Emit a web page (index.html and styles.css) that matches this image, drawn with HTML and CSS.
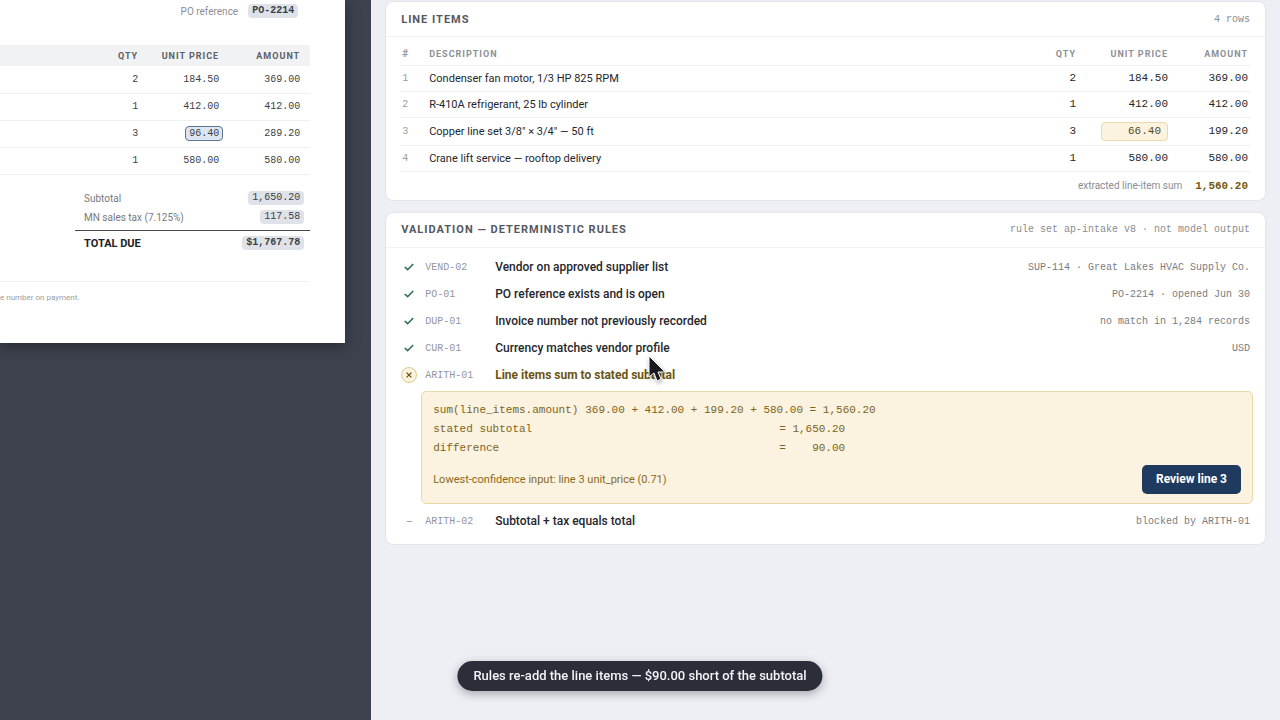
FILE: index.html
```html
<!DOCTYPE html>
<html lang="en">
<head>
    <meta charset="UTF-8">
    <meta name="viewport" content="width=device-width, initial-scale=1.0">
    <title>Invoice review</title>
    <link rel="stylesheet" href="styles.css">
</head>
<body>
    <section class="viewer">
        <div class="sheet">
            <div class="po">
                <span>PO reference</span>
                <b class="field">PO-2214</b>
            </div>
            <table class="invoice">
                <thead>
                    <tr><th></th><th class="qty">Qty</th><th class="unit">Unit price</th><th class="amount">Amount</th></tr>
                </thead>
                <tbody>
                    <tr><td></td><td>2</td><td>184.50</td><td>369.00</td></tr>
                    <tr><td></td><td>1</td><td>412.00</td><td>412.00</td></tr>
                    <tr><td></td><td>3</td><td><span class="picked">96.40</span></td><td>289.20</td></tr>
                    <tr><td></td><td>1</td><td>580.00</td><td>580.00</td></tr>
                </tbody>
            </table>
            <div class="totals">
                <div class="total-row"><span>Subtotal</span><span class="field">1,650.20</span></div>
                <div class="total-row"><span>MN sales tax (7.125%)</span><span class="field">117.58</span></div>
                <div class="total-row due"><span>TOTAL DUE</span><span class="field">$1,767.78</span></div>
            </div>
            <p class="footnote">e number on payment.</p>
        </div>
    </section>

    <main class="review">
        <section class="card">
            <header class="card-head">
                <h2>Line items</h2>
                <span>4 rows</span>
            </header>
            <div class="items-wrap">
                <table class="items">
                    <thead>
                        <tr><th class="num">#</th><th class="desc">Description</th><th class="qty">Qty</th><th class="unit">Unit price</th><th class="amount">Amount</th></tr>
                    </thead>
                    <tbody>
                        <tr><td class="num">1</td><td class="desc">Condenser fan motor, 1/3 HP 825 RPM</td><td>2</td><td>184.50</td><td>369.00</td></tr>
                        <tr><td class="num">2</td><td class="desc">R-410A refrigerant, 25 lb cylinder</td><td>1</td><td>412.00</td><td>412.00</td></tr>
                        <tr class="flagged"><td class="num">3</td><td class="desc">Copper line set 3/8" × 3/4" — 50 ft</td><td>3</td><td><input type="text" class="price" aria-label="Line 3 unit price" value="66.40"></td><td>199.20</td></tr>
                        <tr><td class="num">4</td><td class="desc">Crane lift service — rooftop delivery</td><td>1</td><td>580.00</td><td>580.00</td></tr>
                    </tbody>
                </table>
                <div class="sum">
                    <span>extracted line-item sum</span>
                    <b>1,560.20</b>
                </div>
            </div>
        </section>

        <section class="card">
            <header class="card-head">
                <h2>Validation — deterministic rules</h2>
                <span>rule set ap-intake v8 · not model output</span>
            </header>
            <div class="rules">
                <div class="rule">
                    <svg class="check" viewBox="0 0 16 16"><path d="M3.8 8l2.8 2.7L12.2 5"/></svg>
                    <code>VEND-02</code>
                    <strong>Vendor on approved supplier list</strong>
                    <span class="note">SUP-114 · Great Lakes HVAC Supply Co.</span>
                </div>
                <div class="rule">
                    <svg class="check" viewBox="0 0 16 16"><path d="M3.8 8l2.8 2.7L12.2 5"/></svg>
                    <code>PO-01</code>
                    <strong>PO reference exists and is open</strong>
                    <span class="note">PO-2214 · opened Jun 30</span>
                </div>
                <div class="rule">
                    <svg class="check" viewBox="0 0 16 16"><path d="M3.8 8l2.8 2.7L12.2 5"/></svg>
                    <code>DUP-01</code>
                    <strong>Invoice number not previously recorded</strong>
                    <span class="note">no match in 1,284 records</span>
                </div>
                <div class="rule">
                    <svg class="check" viewBox="0 0 16 16"><path d="M3.8 8l2.8 2.7L12.2 5"/></svg>
                    <code>CUR-01</code>
                    <strong>Currency matches vendor profile</strong>
                    <span class="note">USD</span>
                </div>
                <div class="rule failed">
                    <svg class="cross" viewBox="0 0 16 16"><circle cx="8" cy="8" r="7.5"/><path d="M5.6 5.6l4.8 4.8M10.4 5.6l-4.8 4.8"/></svg>
                    <code>ARITH-01</code>
                    <strong>Line items sum to stated subtotal</strong>
                </div>
                <div class="detail">
                    <div class="math">
                        <span>sum(line_items.amount)</span><span>369.00 + 412.00 + 199.20 + 580.00 = 1,560.20</span>
                        <span>stated subtotal</span><span class="result"><i>=</i>1,650.20</span>
                        <span>difference</span><span class="result"><i>=</i>90.00</span>
                    </div>
                    <div class="action">
                        <span>Lowest-confidence input: line 3 unit_price (0.71)</span>
                        <button type="button">Review line 3</button>
                    </div>
                </div>
                <div class="rule">
                    <span class="dash">–</span>
                    <code>ARITH-02</code>
                    <strong>Subtotal + tax equals total</strong>
                    <span class="note">blocked by ARITH-01</span>
                </div>
            </div>
        </section>
    </main>

    <div class="toast" role="status">Rules re-add the line items — $90.00 short of the subtotal</div>
    <svg class="pointer" viewBox="0 0 20 28"><path d="M2 1v21l5-4 3 8 4-2-3-7h7z"/></svg>
</body>
</html>
```
FILE: styles.css
```css
* {
    box-sizing: border-box;
}

body {
    margin: 0;
    min-height: 100vh;
    display: grid;
    grid-template-columns: 29fr 71fr;
    background: #edeff4;
    color: #25272c;
    font-family: Roboto, sans-serif;
    font-size: 12px;
    overflow: hidden;
}

code, .field, .invoice td, .items td, .card-head span, .sum b, .note, .math, .price {
    font-family: "Liberation Mono", monospace;
}

/* Scanned invoice */
.viewer {
    background: #3d424e;
    padding-right: 26px;
}

.sheet {
    background: #fff;
    padding: 1px 35px 38px 0;
    box-shadow: 0 4px 14px rgba(0, 0, 0, 0.35);
}

.po {
    display: flex;
    justify-content: flex-end;
    align-items: center;
    gap: 10px;
    height: 20px;
    padding-right: 12px;
    margin-bottom: 24px;
    color: #8c8f95;
    font-size: 10px;
}

.field {
    padding: 0 4px;
    border-radius: 4px;
    background: #dfe3e9;
    color: #3c3f45;
    font-size: 10px;
    line-height: 14px;
}

.invoice, .items {
    width: 100%;
    border-collapse: collapse;
    text-align: right;
}

.invoice th {
    height: 21px;
    padding: 0 10px 0 0;
    background: #f1f2f4;
    color: #5c5f66;
    font-size: 9px;
    letter-spacing: 1px;
    text-transform: uppercase;
}

.invoice .qty {
    width: 78px;
}

.invoice .unit, .invoice .amount {
    width: 81px;
}

.invoice td {
    height: 27px;
    padding: 0 10px 0 0;
    border-bottom: 1px solid #eeeff1;
    color: #3c3f45;
    font-size: 10px;
}

.picked {
    display: inline-block;
    margin-right: -4px;
    padding: 0 3px;
    border: 1px solid #5e7590;
    border-radius: 4px;
    background: #dde6f0;
    line-height: 13px;
}

.totals {
    margin: 14px 0 25px 75px;
    color: #777a80;
    font-size: 10px;
}

.total-row {
    display: flex;
    justify-content: space-between;
    align-items: center;
    height: 19px;
    padding: 0 6px 0 9px;
}

.due {
    height: 26px;
    margin-top: 3px;
    border-top: 1px solid #45474c;
    color: #1e2024;
    font-size: 11px;
    font-weight: bold;
}

.footnote {
    margin: 0;
    padding-top: 9px;
    border-top: 1px solid #f0f1f2;
    color: #9a9ca1;
    font-size: 8px;
    line-height: 14px;
}

/* Review column */
.review {
    padding: 2px 15px 0;
}

.card {
    margin-bottom: 13px;
    border-radius: 7px;
    background: #fff;
    box-shadow: 0 0 2px rgba(40, 50, 80, 0.15);
}

.card-head {
    display: flex;
    justify-content: space-between;
    align-items: center;
    height: 35px;
    padding: 0 15px;
    border-bottom: 1px solid #f0f1f3;
}

.card-head h2 {
    margin: 0;
    color: #55585f;
    font-size: 11px;
    letter-spacing: 1px;
    text-transform: uppercase;
}

.card-head span {
    color: #898c93;
    font-size: 10px;
}

.items-wrap {
    padding: 3px 14px 0;
}

.items th {
    height: 25px;
    padding: 3px 3px 0 0;
    border-bottom: 1px solid #f0f1f3;
    color: #8d9097;
    font-size: 9px;
    letter-spacing: 1px;
    text-transform: uppercase;
}

.items td {
    height: 26px;
    padding: 0 3px 0 0;
    border-bottom: 1px solid #f0f1f3;
    font-size: 11px;
}

.items .flagged td {
    height: 28px;
}

.items .num {
    width: 29px;
    padding-left: 2px;
    color: #9a9da4;
    font-size: 10px;
    text-align: left;
}

.items .desc {
    text-align: left;
}

.items td.desc {
    font-family: inherit;
    font-size: 11px;
}

.items .qty {
    width: 80px;
}

.items .unit {
    width: 92px;
}

.items .amount {
    width: 80px;
}

.price {
    width: 67px;
    height: 19px;
    padding: 0 6px;
    border: 1px solid #ead9ab;
    border-radius: 4px;
    background: #fbf2df;
    color: #5c4a1c;
    font-size: 11px;
    text-align: right;
    vertical-align: middle;
}

.sum {
    display: flex;
    justify-content: flex-end;
    align-items: center;
    gap: 13px;
    height: 28px;
    padding-right: 3px;
    color: #898c93;
    font-size: 10px;
}

.sum b {
    color: #735a10;
    font-size: 11px;
}

.rules {
    padding: 6px 12px 9px 15px;
}

.rule {
    display: grid;
    grid-template-columns: 16px 62px 1fr auto;
    column-gap: 8px;
    align-items: center;
    height: 27px;
    padding-right: 3px;
}

.rule svg {
    width: 16px;
    height: 16px;
    fill: none;
    stroke-width: 1.6;
}

.check {
    stroke: #2c6e51;
}

.cross {
    stroke: #6b5413;
}

.cross circle {
    fill: #fbf2df;
    stroke: #dfcb92;
    stroke-width: 1;
}

.cross path {
    stroke-width: 1.3;
}

.rule code, .dash {
    color: #9295a0;
    font-size: 10px;
}

.dash {
    text-align: center;
}

.rule strong {
    font-size: 12px;
    font-weight: 500;
}

.failed strong {
    color: #6b5413;
    font-weight: bold;
}

.note {
    color: #797c83;
    font-size: 10px;
}

.detail {
    margin: 2px 0 4px 20px;
    padding: 9px 11px;
    border: 1px solid #ead9a6;
    border-radius: 5px;
    background: #fbf2df;
    color: #7d6420;
}

.math {
    display: grid;
    grid-template-columns: 152px 1fr;
    font-size: 11px;
    line-height: 19px;
}

.math .result {
    display: flex;
    justify-content: space-between;
    width: 66px;
    margin-left: 194px;
}

.math i {
    font-style: normal;
}

.action {
    display: flex;
    justify-content: space-between;
    align-items: center;
    margin-top: 7px;
    color: #8a6a1c;
    font-size: 11px;
}

.action button {
    height: 29px;
    padding: 0 14px;
    border: none;
    border-radius: 5px;
    background: #1f3a5f;
    color: #fff;
    font-family: inherit;
    font-size: 12px;
    font-weight: bold;
}

.toast {
    position: fixed;
    bottom: 29px;
    left: 50%;
    transform: translateX(-50%);
    padding: 0 16px;
    border-radius: 15px;
    background: #2b2e39;
    box-shadow: 0 3px 10px rgba(30, 35, 50, 0.35);
    color: #f3f4f7;
    font-size: 13px;
    font-weight: 500;
    line-height: 30px;
    white-space: nowrap;
}

.pointer {
    position: absolute;
    top: 355px;
    left: 647px;
    width: 20px;
    height: 28px;
    fill: #17181f;
    stroke: #fff;
    filter: drop-shadow(1px 2px 2px rgba(0, 0, 0, 0.35));
}
```
